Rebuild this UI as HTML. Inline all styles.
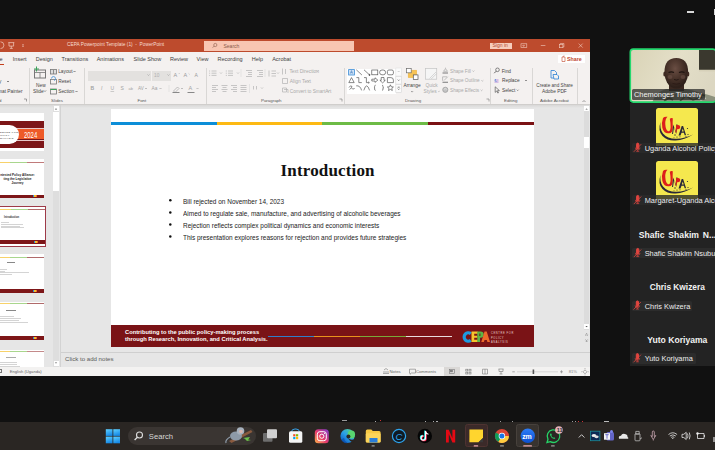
<!DOCTYPE html>
<html><head><meta charset="utf-8">
<style>
*{margin:0;padding:0;box-sizing:border-box}
html,body{width:715px;height:450px;overflow:hidden;background:#111111;font-family:"Liberation Sans",sans-serif;position:relative}
.a{position:absolute}
.t{position:absolute;white-space:nowrap;line-height:1}
.tab{position:absolute;top:56.6px;font-size:5.5px;color:#404040;white-space:nowrap;line-height:1}
.rt{position:absolute;font-size:5.2px;color:#444;white-space:nowrap;line-height:1}
.rd{color:#a9a9a9}
.sep{position:absolute;width:1px;background:#d9d7d5}
.gl{position:absolute;top:98.7px;font-size:4.4px;color:#555;white-space:nowrap;line-height:1}
</style></head><body>

<!-- zoom top icons -->
<div class="a" style="left:687px;top:11px;width:7px;height:1.5px;background:#d8d8d8"></div>
<div class="a" style="left:714px;top:9px;width:3px;height:6px;border:1px solid #d8d8d8"></div>

<!-- PowerPoint window -->
<div class="a" style="left:0;top:38.7px;width:590px;height:337.3px;background:#e6e6e6"></div>
<!-- title bar -->
<div class="a" style="left:0;top:38.7px;width:590px;height:13.3px;background:#bd4b2d"></div>
<div class="t" style="left:67px;top:42.6px;font-size:4.8px;color:#f6dcd2">CEPA Powerpoint Template (1)&nbsp; - &nbsp;PowerPoint</div>
<div class="a" style="left:204px;top:41px;width:150px;height:10px;background:#f8c6b2"></div>
<div class="t" style="left:223.5px;top:43.5px;font-size:5px;color:#8a5a4a">Search</div>
<svg class="a" style="left:0;top:0" width="715" height="450"><circle cx="215.3" cy="45" r="1.6" fill="none" stroke="#8a5a4a" stroke-width="0.6"/><path d="M214.2 46.1 l-1.5 1.5" stroke="#8a5a4a" stroke-width="0.7"/></svg>
<div class="a" style="left:490px;top:42.5px;width:22px;height:6.5px;background:#f6cdbd"></div>
<div class="t" style="left:492.5px;top:43.3px;font-size:5px;color:#b44a30">Sign in</div>
<svg class="a" style="left:0;top:0" width="715" height="450"><g fill="none" stroke="#f2cfc2" stroke-width="0.6">
 <rect x="521" y="43.8" width="5.8" height="3.8"/><path d="M523 45.7 h2 M523.5 44.8 l-0.8 0.9 l0.8 0.9"/>
 <path d="M540.8 45.5 h4.6"/>
 <rect x="559.3" y="44.3" width="3.6" height="3.4"/><path d="M560.3 44.3 v-0.8 h3.6 v3.4 h-1"/>
 <path d="M578.7 43.6 l4 4 M582.7 43.6 l-4 4"/>
</g></svg>
<svg class="a" style="left:0;top:0" width="715" height="450"><g fill="none" stroke="#f2cfc2" stroke-width="0.7">
 <path d="M0.5 41.8 a3.4 3.4 0 0 1 0 6.8"/>
 <path d="M8.3 42.6 h6 M9 42.6 v3.5 h4.6 v-3.5 M11.3 46.1 v2.2 M9.8 48.4 h3"/>
 <path d="M22 44.8 h2 M22 46.3 h2" stroke-width="0.6"/>
</g></svg>
<!-- ribbon -->
<div class="a" style="left:0;top:52px;width:590px;height:52px;background:#f4f1f0"></div>
<div class="a" style="left:0;top:104px;width:590px;height:1px;background:#d0cecc"></div>

<div class="a" style="left:0;top:63.5px;width:4px;height:1.2px;background:#c43e1c"></div>
<div class="tab" style="left:-0.6px;color:#333">e</div>
<div class="tab" style="left:12.8px">Insert</div>
<div class="tab" style="left:35.8px">Design</div>
<div class="tab" style="left:61.5px">Transitions</div>
<div class="tab" style="left:96.7px">Animations</div>
<div class="tab" style="left:133.6px">Slide Show</div>
<div class="tab" style="left:170px">Review</div>
<div class="tab" style="left:196.6px">View</div>
<div class="tab" style="left:217.5px">Recording</div>
<div class="tab" style="left:251.7px">Help</div>
<div class="tab" style="left:272.2px">Acrobat</div>
<div class="a" style="left:558px;top:55px;width:26.5px;height:8px;background:#fff"></div>
<div class="t" style="left:567px;top:56.8px;font-size:5.3px;color:#c0452a;font-weight:bold">Share</div>


<!-- ribbon groups -->
<div class="t" style="left:-1px;top:80.2px;font-size:4.8px;color:#555">y</div>
<div class="t" style="left:-2px;top:90.2px;font-size:4.8px;color:#444">mat Painter</div>
<div class="t" style="left:-1px;top:99px;font-size:4.4px;color:#555">d</div>
<div class="sep" style="left:28.5px;top:68.2px;height:36px"></div>
<div class="t" style="left:36px;top:83.9px;font-size:4.8px;color:#444">New</div>
<div class="t" style="left:33px;top:90.1px;font-size:4.8px;color:#444">Slide</div>
<div class="t" style="left:58.2px;top:70.2px;font-size:4.8px;color:#444">Layout</div>
<div class="t" style="left:58.2px;top:80.2px;font-size:4.8px;color:#444">Reset</div>
<div class="t" style="left:58.2px;top:90.1px;font-size:4.8px;color:#444">Section</div>
<div class="gl" style="left:51px">Slides</div>
<div class="sep" style="left:84px;top:68.2px;height:36px"></div>
<div class="a" style="left:88px;top:71.2px;width:62.8px;height:9.6px;background:#e3e1df"></div>
<div class="a" style="left:152.2px;top:71.2px;width:18.4px;height:9.6px;background:#e3e1df"></div>
<div class="t" style="left:154px;top:73.7px;font-size:4.8px;color:#b0b0b0">10</div>
<div class="gl" style="left:137.5px">Font</div>
<div class="sep" style="left:205.5px;top:68.2px;height:36px"></div>
<div class="t rd" style="left:289.4px;top:70.2px;font-size:4.9px">Text Direction</div>
<div class="t rd" style="left:289.8px;top:80.2px;font-size:4.9px">Align Text</div>
<div class="t rd" style="left:289.8px;top:89.9px;font-size:4.7px">Convert to SmartArt</div>
<div class="gl" style="left:261px">Paragraph</div>
<div class="sep" style="left:344px;top:68.2px;height:36px"></div>
<div class="a" style="left:347.3px;top:69.1px;width:48.3px;height:24.5px;background:#fff"></div>
<div class="t" style="left:403.5px;top:84.1px;font-size:4.8px;color:#444">Arrange</div>
<div class="t rd" style="left:425.5px;top:84.1px;font-size:4.8px">Quick</div>
<div class="t rd" style="left:423.5px;top:90.4px;font-size:4.8px">Styles</div>
<div class="t rd" style="left:450px;top:69.9px;font-size:4.7px">Shape Fill</div>
<div class="t rd" style="left:450px;top:79.4px;font-size:4.7px">Shape Outline</div>
<div class="t rd" style="left:450px;top:88.9px;font-size:4.7px">Shape Effects</div>
<div class="gl" style="left:405px">Drawing</div>
<div class="sep" style="left:490px;top:68.2px;height:36px"></div>
<div class="t" style="left:501.7px;top:69.9px;font-size:4.8px;color:#444">Find</div>
<div class="t" style="left:502px;top:79.4px;font-size:4.8px;color:#444">Replace</div>
<div class="t" style="left:502px;top:89.2px;font-size:4.8px;color:#444">Select</div>
<div class="gl" style="left:504px">Editing</div>
<div class="sep" style="left:532.3px;top:68.2px;height:36px"></div>
<div class="t" style="left:536.3px;top:83.9px;font-size:4.65px;color:#444">Create and Share</div>
<div class="t" style="left:542px;top:89.9px;font-size:4.8px;color:#444">Adobe PDF</div>
<div class="gl" style="left:540px;font-size:4.4px">Adobe Acrobat</div>
<div class="sep" style="left:577.3px;top:68.2px;height:36px"></div>
<svg class="a" style="left:0;top:0" width="715" height="450" viewBox="0 0 715 450">
 <g fill="none" stroke-width="0.8">
  <!-- clipboard dropdown -->
  <path d="M7 81 l1 1 l1 -1" stroke="#666"/>
  <path d="M24 99 h2.5 v2.5" stroke="#888"/>
  <!-- new slide -->
  <rect x="34.5" y="70" width="11" height="8" stroke="#777" stroke-width="1"/>
  <path d="M35 72.5 h10 M40 72.5 v5.5" stroke="#777"/>
  <path d="M36.5 66.5 v5 M34 69 h5" stroke="#3aa35a" stroke-width="1"/>
  <path d="M44 90.5 l1 1 l1 -1" stroke="#666"/>
  <!-- layout -->
  <rect x="50.5" y="69.5" width="6" height="4.5" stroke="#777" fill="#ddd"/>
  <path d="M53.5 70 v4" stroke="#777"/>
  <path d="M73.5 71 l1 1 l1 -1" stroke="#666"/>
  <!-- reset -->
  <rect x="50.5" y="79.5" width="6" height="4.5" stroke="#777"/>
  <path d="M51.5 78.5 a2 2 0 1 1 2.5 2" stroke="#3d8ed6"/>
  <!-- section -->
  <rect x="50.5" y="89" width="6" height="5" stroke="#777"/>
  <path d="M50.5 89.5 h6" stroke="#3aa35a" stroke-width="1"/>
  <path d="M75.5 91 l1 1 l1 -1" stroke="#666"/>
  <!-- font dropdown chevrons -->
  <path d="M147.5 74.5 l1 1 l1 -1" stroke="#aaa"/>
  <path d="M167.5 74.5 l1 1 l1 -1" stroke="#aaa"/>
 </g>
 <g fill="#9a9a9a" font-family="Liberation Sans" font-size="5.5">
  <text x="173.5" y="76.5">A</text><text x="183.5" y="76.5">A</text><text x="194.5" y="76.5" font-size="5">A</text>
 </g>
 <g fill="#a3a3a3" font-family="Liberation Sans" font-size="5">
  <text x="90.5" y="90" font-weight="bold">B</text>
  <text x="101" y="90" font-style="italic">I</text>
  <text x="110.5" y="90" text-decoration="underline">U</text>
  <text x="120.5" y="90">S</text>
  <text x="128.5" y="90" font-size="4">ab</text>
  <text x="138" y="90" font-size="4.5">AV</text>
  <text x="151.5" y="90" font-size="4.8">Aa</text>
  <text x="188.5" y="90" font-size="5.5">A</text>
 </g>
 <g fill="none" stroke="#a8a8a8" stroke-width="0.7">
  <path d="M178.7 74 l0.8 -0.8 M188.7 73.5 l0.8 0.8"/>
  <path d="M145 88 l1 1 l1 -1 M159.5 88 l1 1 l1 -1 M181 88 l1 1 l1 -1 M196.5 88 l1 1 l1 -1"/>
  <path d="M173.5 91 l4 -4 l1.5 1.5 l-4 4 z"/>
  <path d="M172.5 92.5 h7 M187.5 92.5 h7" stroke="#888" stroke-width="1"/>
  <path d="M169 85 v7" stroke="#ddd"/>
 </g>
 <!-- paragraph icons -->
 <g fill="none" stroke="#b2b2b2" stroke-width="0.7">
  <path d="M211.5 71 h5 M211.5 73.2 h5 M211.5 75.4 h5"/>
  <path d="M209.3 71 h0.8 M209.3 73.2 h0.8 M209.3 75.4 h0.8" stroke-width="0.9"/>
  <path d="M220 72.5 l1 1 l1 -1 M237 72.5 l1 1 l1 -1 M277 72.5 l1 1 l1 -1 M261 87.5 l1 1 l1 -1"/>
  <path d="M228 71 h5 M228 73.2 h5 M228 75.4 h5"/>
  <path d="M225.8 71 h1 M225.8 73.2 h1 M225.8 75.4 h1" stroke-width="0.8"/>
  <path d="M246 70.5 h6 M248 72.5 h4 M248 74.5 h4 M246 76.5 h6"/>
  <path d="M257 70.5 h6 M259 72.5 h4 M259 74.5 h4 M257 76.5 h6"/>
  <path d="M269 70.5 v6 M271.5 71 h4.5 M271.5 73.5 h4.5 M271.5 76 h4.5"/>
  <path d="M212 85.5 h6 M212 87.5 h4 M212 89.5 h6 M212 91.5 h4"/>
  <path d="M221.5 85.5 h6 M222.5 87.5 h4 M221.5 89.5 h6 M222.5 91.5 h4"/>
  <path d="M231 85.5 h6 M233 87.5 h4 M231 89.5 h6 M233 91.5 h4"/>
  <path d="M240.5 85.5 h6 M240.5 87.5 h6 M240.5 89.5 h6 M240.5 91.5 h6"/>
  <path d="M253.5 86 v3.5 M256.5 86 v3.5"/>
  <path d="M241 69 v8 M265 69 v8 M249.5 84 v9" stroke="#dcdcdc"/>
  <path d="M282.5 68.5 v6 M285.5 69 v5" />
  <path d="M282.5 78.5 h5 v5 h-5 z"/>
  <path d="M282.5 88 h4 v4 h-4 z M284 89.5 h4 v3.5"/>
  <path d="M316.5 70.5 l1 1 l1 -1 M307.5 80.5 l1 1 l1 -1 M327.5 90.5 l1 1 l1 -1"/>
  <path d="M339.5 99 h2.5 v2.5" stroke="#888"/>
 </g>
 <!-- drawing shapes gallery -->
 <g fill="none" stroke="#4a4a4a" stroke-width="0.65">
  <rect x="348.6" y="69.6" width="5.8" height="5.4" stroke="#3d8ed6" fill="#cfe1f5" stroke-width="0.8"/>
  <path d="M350.3 73.6 l1.2 -3 l1.2 3 M350.8 72.6 h1.4" stroke="#2a6fb8" stroke-width="0.5"/>
  <path d="M356.3 69.8 l5.6 5.2"/>
  <path d="M364 69.8 l5.2 4.8"/><circle cx="369.5" cy="74.9" r="0.6" fill="#4a4a4a"/>
  <rect x="371.8" y="70" width="6" height="4.8"/>
  <rect x="379.6" y="70" width="6" height="4.8" rx="2.4"/>
  <rect x="387.4" y="70" width="6" height="4.8" rx="1.5"/>
  <path d="M348.8 82.6 l2.7 -5 l2.7 5 z"/>
  <path d="M356.4 77.6 h2.4 v5 h3"/>
  <path d="M364 77.6 h2.4 v5 h2.8 M368.4 81.8 l0.9 0.8 l-0.9 0.8"/>
  <path d="M371.8 79.2 h3.2 v-1.4 l2.8 2.3 l-2.8 2.3 v-1.4 h-3.2 z"/>
  <path d="M381.2 77.5 h2.8 v2.8 h1.3 l-2.7 2.6 l-2.7 -2.6 h1.3 z"/>
  <path d="M387.4 77.6 h3.5 a2.5 2.5 0 0 1 2.5 2.5 v2.5 h-6 z"/>
  <path d="M349 87.5 q1.5 -2.8 3 -1 q-1.5 1.5 0.5 2.5 q1.5 0.5 2 -1 M349.5 89.5 l1.5 -1.3"/>
  <path d="M356.2 85.8 q4 -0.5 5.4 4.6"/>
  <path d="M363.8 90.4 q1.5 -5 3 -4.6 q1.4 0.4 2.8 4.6"/>
  <path d="M375.6 85.2 q-1 0 -1 1.3 v0.8 q0 0.5 -0.6 0.5 q0.6 0 0.6 0.5 v0.8 q0 1.3 1 1.3"/>
  <path d="M382 85.2 q1 0 1 1.3 v0.8 q0 0.5 0.6 0.5 q-0.6 0 -0.6 0.5 v0.8 q0 1.3 -1 1.3"/>
  <path d="M390.4 84.8 l0.9 2 l2.1 0.2 l-1.6 1.4 l0.5 2.1 l-1.9 -1.1 l-1.9 1.1 l0.5 -2.1 l-1.6 -1.4 l2.1 -0.2 z"/>
 </g>
 <g fill="none" stroke="#999" stroke-width="0.6">
  <rect x="395.8" y="68" width="5.8" height="8" fill="#fbfbfb" stroke="#e2e2e2"/>
  <rect x="395.8" y="76.3" width="5.8" height="7.8" fill="#fbfbfb" stroke="#d4d4d4"/>
  <rect x="395.8" y="84.4" width="5.8" height="8" fill="#fbfbfb" stroke="#d4d4d4"/>
  <path d="M397.7 79.6 l1 1 l1 -1 M397.7 87.2 h2 M397.7 88.6 l1 1 l1 -1" stroke="#444"/>
  <path d="M397.7 71.5 h2" stroke="#bbb"/>
 </g>
 <!-- arrange -->
 <g stroke-width="0.7">
  <rect x="408.2" y="70.2" width="8.5" height="7.4" fill="#f6c356" stroke="#eeb13a" stroke-width="0.5"/>
  <rect x="406.4" y="68.5" width="4.8" height="4.3" fill="#fff" stroke="#6a6a6a"/>
  <rect x="413.3" y="74.9" width="4.7" height="4.7" fill="#fff" stroke="#555"/>
  <path d="M411.3 91.3 l0.8 0.8 l0.8 -0.8" fill="none" stroke="#555"/>
  <rect x="425.4" y="68.5" width="11.3" height="10.7" fill="#f5f5f5" stroke="#c4c4c4"/>
  <path d="M429.5 78.5 l6.5 -6.5 M431.2 79 l5.5 -5.5" stroke="#c8c8c8" fill="none"/>
  <path d="M438 91 l0.9 0.9 l0.9 -0.9" fill="none" stroke="#bbb"/>
 </g>
 <!-- shape fill/outline/effects icons -->
 <g fill="none" stroke="#a8a8a8" stroke-width="0.7">
  <path d="M442.5 73 h5.5" stroke="#8c8c8c" stroke-width="1.2"/>
  <path d="M443.5 71.3 l2 -2.6 l2 2.6 z M445.5 68.7 v-1"/>
  <path d="M442.5 82.3 h5.5" stroke="#8c8c8c" stroke-width="1.2"/>
  <path d="M442.6 80.8 v-4 h4.5 M444 80.5 l3.8 -3.8"/>
  <circle cx="445.3" cy="89.8" r="2.6" fill="#c4c4c4" stroke="#9a9a9a"/>
  <path d="M443.8 89.3 q1.5 -1.5 3 0" stroke="#eee" stroke-width="0.6"/>
  <path d="M472.5 70.6 l0.9 0.9 l0.9 -0.9 M481.5 80.3 l0.9 0.9 l0.9 -0.9 M480.7 89.8 l0.9 0.9 l0.9 -0.9"/>
  <path d="M486.5 99 h2.5 v2.5" stroke="#888"/>
 </g>
 <!-- editing -->
 <g fill="none" stroke-width="0.7">
  <circle cx="497.5" cy="69.8" r="1.8" stroke="#555"/>
  <path d="M496.2 71.2 l-2 2" stroke="#555" stroke-width="0.9"/>
  <path d="M494.5 80 h4 M494.5 82 h4" stroke="#9e5fd3"/>
  <path d="M495.5 79 q-1 2 1 3" stroke="#3d8ed6"/>
  <path d="M525 80 l1 1 l1 -1 M516.8 89.7 l0.9 0.9 l0.9 -0.9" stroke="#666"/>
  <path d="M495.2 86.8 v5.6 l1.4 -1.4 l1.2 2.1 l0.7 -0.4 l-1.1 -2 l2 -0.1 z" stroke="#444" stroke-width="0.6"/>
 </g>
 <!-- adobe icon -->
 <g fill="none" stroke="#2a7fd4" stroke-width="0.8">
  <path d="M551 70.5 h3.5 l2 2 v5.5 h-5.5 z"/>
  <path d="M553 74.5 h4 l1.5 1.5 v3 h-4.5 z" fill="#f3f2f1"/>
 </g>
 <path d="M582.5 102 l1.5 -1.5 l1.5 1.5" fill="none" stroke="#777" stroke-width="0.7"/>
 <!-- share icon -->
 <path d="M562 57 h3 v4.5 h-3 z M563 57 l1 -1.5" fill="none" stroke="#c0452a" stroke-width="0.6"/>
</svg>


<!-- thumbnail pane -->
<div class="a" style="left:0;top:105px;width:590px;height:3px;background:linear-gradient(#d9d8d7,#e6e6e6)"></div>
<!-- thumb 1 -->
<div class="a" style="left:0;top:112.7px;width:44.3px;height:38.5px;background:#fff;overflow:hidden">
  <div class="a" style="left:0;top:8.3px;width:45px;height:27.5px;background:#7d1618"></div>
  <div class="a" style="left:0;top:15.2px;width:45px;height:1px;background:#e8c8c8"></div>
  <div class="a" style="left:0;top:16.7px;width:45px;height:9.9px;background:#ee5a28"></div>
  <div class="a" style="left:0;top:27.3px;width:45px;height:1px;background:#e8c8c8"></div>
  <div class="a" style="left:-12px;top:12.5px;width:30.8px;height:19.3px;background:#fff;border-radius:10px"></div>
  <div class="t" style="left:0px;top:18.6px;font-size:2.5px;color:#555;font-weight:bold;letter-spacing:0.45px;line-height:3px">ENTRE FOR<br>OLICY<br>NALYSIS</div>
  <div class="t" style="left:23.8px;top:17.4px;font-size:7px;color:#fff;letter-spacing:0px;transform:scale(0.85,1.3);transform-origin:0 0">2024</div>
</div>
<!-- thumb 2 -->
<div class="a" style="left:0;top:159.4px;width:44.3px;height:38.4px;background:#fff;overflow:hidden">
  <div class="a" style="left:0;top:2.3px;width:10px;height:0.9px;background:#f7d26a"></div>
  <div class="a" style="left:10px;top:2.3px;width:17px;height:0.9px;background:#a9d68d"></div>
  <div class="a" style="left:27px;top:2.3px;width:18px;height:0.9px;background:#c07a7a"></div>
  <div class="t" style="left:0px;top:14.8px;font-size:3.1px;color:#222;font-weight:bold;line-height:3.9px;text-align:center;width:35px">ntested Policy Alliance:<br>ting the Legislative<br>Journey</div>
  <div class="a" style="left:0;top:35.2px;width:45px;height:3.2px;background:#7d1618"></div>
  <div class="a" style="left:33px;top:36px;width:3.5px;height:1.5px;background:linear-gradient(90deg,#2d8fd8 0 30%,#f2c02c 30% 65%,#ef6a2a 65%)"></div>
</div>
<!-- thumb 3 selected -->
<div class="a" style="left:-2px;top:205.9px;width:47.9px;height:40.8px;border:1.6px solid #9e3a48;background:#fff;overflow:hidden">
  <div class="a" style="left:0;top:2.2px;width:12px;height:0.9px;background:#f7d26a"></div>
  <div class="a" style="left:12px;top:2.2px;width:17px;height:0.9px;background:#a9d68d"></div>
  <div class="a" style="left:29px;top:2.2px;width:20px;height:0.9px;background:#b06a6a"></div>
  <div class="t" style="left:5px;top:10.6px;font-size:2.6px;color:#333;font-weight:bold">Introduction</div>
  <div class="a" style="left:2px;top:15.5px;width:8px;height:0.6px;background:#d4d4d4"></div>
  <div class="a" style="left:2px;top:17.2px;width:22px;height:0.6px;background:#d4d4d4"></div>
  <div class="a" style="left:2px;top:18.9px;width:19px;height:0.6px;background:#d4d4d4"></div>
  <div class="a" style="left:2px;top:20.6px;width:23px;height:0.6px;background:#d4d4d4"></div>
  <div class="a" style="left:0;top:33.5px;width:50px;height:3.4px;background:#7d1618"></div>
  <div class="a" style="left:35px;top:34.4px;width:3.5px;height:1.5px;background:linear-gradient(90deg,#2d8fd8 0 30%,#f2c02c 30% 65%,#ef6a2a 65%)"></div>
</div>
<!-- thumb 4 -->
<div class="a" style="left:0;top:254.4px;width:44.3px;height:38.4px;background:#fff;overflow:hidden">
  <div class="a" style="left:0;top:2.3px;width:10px;height:0.9px;background:#f7d26a"></div>
  <div class="a" style="left:10px;top:2.3px;width:17px;height:0.9px;background:#a9d68d"></div>
  <div class="a" style="left:27px;top:2.3px;width:18px;height:0.9px;background:#b06a6a"></div>
  <div class="a" style="left:7px;top:7.7px;width:8px;height:0.8px;background:#888"></div>
  <div class="a" style="left:0;top:14.5px;width:7px;height:0.6px;background:#d4d4d4"></div>
  <div class="a" style="left:0;top:16.2px;width:5px;height:0.6px;background:#d4d4d4"></div>
  <div class="a" style="left:0;top:17.9px;width:29px;height:0.6px;background:#d4d4d4"></div>
  <div class="a" style="left:0;top:19.6px;width:12px;height:0.6px;background:#d4d4d4"></div>
  <div class="a" style="left:0;top:35px;width:45px;height:3.4px;background:#7d1618"></div>
  <div class="a" style="left:33px;top:35.8px;width:3.5px;height:1.5px;background:linear-gradient(90deg,#2d8fd8 0 30%,#f2c02c 30% 65%,#ef6a2a 65%)"></div>
</div>
<!-- thumb 5 -->
<div class="a" style="left:0;top:301.5px;width:44.3px;height:38.3px;background:#fff;overflow:hidden">
  <div class="a" style="left:0;top:1.6px;width:10px;height:0.9px;background:#f7d26a"></div>
  <div class="a" style="left:10px;top:1.6px;width:17px;height:0.9px;background:#a9d68d"></div>
  <div class="a" style="left:27px;top:1.6px;width:18px;height:0.9px;background:#b06a6a"></div>
  <div class="a" style="left:6px;top:8.5px;width:10px;height:0.8px;background:#888"></div>
  <div class="a" style="left:0;top:14.2px;width:14px;height:0.6px;background:#d4d4d4"></div>
  <div class="a" style="left:0;top:16.2px;width:21px;height:0.6px;background:#d4d4d4"></div>
  <div class="a" style="left:0;top:18.2px;width:19px;height:0.6px;background:#d4d4d4"></div>
  <div class="a" style="left:0;top:20.2px;width:28px;height:0.6px;background:#d4d4d4"></div>
  <div class="a" style="left:0;top:34.6px;width:45px;height:3.7px;background:#7d1618"></div>
  <div class="a" style="left:33px;top:35.5px;width:3.5px;height:1.5px;background:linear-gradient(90deg,#2d8fd8 0 30%,#f2c02c 30% 65%,#ef6a2a 65%)"></div>
</div>
<!-- thumb 6 -->
<div class="a" style="left:0;top:349.5px;width:44.3px;height:18px;background:#fff;overflow:hidden">
  <div class="a" style="left:0;top:1.6px;width:10px;height:0.9px;background:#f7d26a"></div>
  <div class="a" style="left:10px;top:1.6px;width:17px;height:0.9px;background:#a9d68d"></div>
  <div class="a" style="left:27px;top:1.6px;width:18px;height:0.9px;background:#c48a8a"></div>
  <div class="a" style="left:6px;top:7.8px;width:10px;height:0.7px;background:#aaa"></div>
  <div class="a" style="left:0;top:12.8px;width:17px;height:0.6px;background:#d4d4d4"></div>
  <div class="a" style="left:0;top:14.8px;width:17px;height:0.6px;background:#d4d4d4"></div>
  <div class="a" style="left:0;top:16.8px;width:20px;height:0.6px;background:#d4d4d4"></div>
</div>
<!-- left scrollbar -->
<div class="a" style="left:53px;top:105px;width:6px;height:262px;background:#dedede"></div>
<div class="a" style="left:53px;top:112px;width:6px;height:79px;background:#fff"></div>
<div class="a" style="left:53.5px;top:106px;width:5px;height:5px;background:#fff"></div>
<div class="a" style="left:53.5px;top:360.5px;width:5px;height:5px;background:#fff"></div>
<svg class="a" style="left:0;top:0" width="715" height="450"><path d="M54.8 109.5 l1.2 -1.2 l1.2 1.2 z M54.8 362.4 l1.2 1.2 l1.2 -1.2 z" fill="#555"/></svg>
<div class="a" style="left:60px;top:105px;width:1px;height:262px;background:#d3d3d3"></div>

<!-- slide canvas -->
<div class="a" style="left:111px;top:109px;width:423px;height:238px;background:#fff"></div>
<div class="a" style="left:111px;top:121.5px;width:105.6px;height:3.2px;background:#0c8ed8"></div>
<div class="a" style="left:216.6px;top:121.5px;width:105.8px;height:3.2px;background:#fdb913"></div>
<div class="a" style="left:322.4px;top:121.5px;width:105.6px;height:3.2px;background:#6dbb46"></div>
<div class="a" style="left:428px;top:121.5px;width:106px;height:3.2px;background:#7a1114"></div>
<div class="t" style="left:280.6px;top:162.2px;font-size:17px;letter-spacing:0.15px;font-family:'Liberation Serif',serif;font-weight:bold;color:#111">Introduction</div>
<div class="t" style="left:183px;top:196.2px;font-size:7.05px;color:#222;line-height:12.1px;transform:scaleX(0.918);transform-origin:0 0">Bill rejected on November 14, 2023<br>Aimed to regulate sale, manufacture, and advertising of alcoholic beverages<br>Rejection reflects complex political dynamics and economic interests<br>This presentation explores reasons for rejection and provides future strategies</div>
<svg class="a" style="left:0;top:0" width="715" height="450"><g fill="#111"><circle cx="170.3" cy="200.3" r="1.25"/><circle cx="170.3" cy="212.4" r="1.25"/><circle cx="170.3" cy="224.5" r="1.25"/><circle cx="170.3" cy="236.6" r="1.25"/></g></svg>
<!-- slide footer -->
<div class="a" style="left:111px;top:325px;width:423px;height:22px;background:#7a1316"></div>
<div class="t" style="left:125px;top:329.2px;font-size:5.75px;color:#fff;font-weight:bold;line-height:6.9px">Contributing to the public policy-making process<br>through Research, Innovation, and Critical Analysis.</div>
<div class="a" style="left:268.3px;top:335.5px;width:46px;height:1.2px;background:#2f7fc8"></div>
<div class="a" style="left:314.3px;top:335.5px;width:46px;height:1.2px;background:#e9921c"></div>
<div class="a" style="left:360.3px;top:335.5px;width:45.5px;height:1.2px;background:#7aa83a"></div>
<div class="a" style="left:405.8px;top:335.5px;width:46px;height:1.2px;background:#e8dcdc"></div>
<svg class="a" style="left:0;top:0" width="715" height="450">
 <path d="M470.8 333.6 a4.2 4.2 0 1 0 0 6.8" fill="none" stroke="#1e9be0" stroke-width="3.2"/>
 <path d="M471.5 331.5 h6.3 v2.3 h-3.6 v1.9 h3.2 v2.1 h-3.2 v1.9 h3.6 v2.3 h-6.3 z" fill="#f6c42c"/>
 <path d="M477.3 331.5 h3.3 a3.1 3.1 0 0 1 0 6.2 h-0.6 v4.3 h-2.7 z" fill="#5cb646"/>
 <rect x="479.4" y="333.5" width="1" height="2.5" fill="#7a1316"/>
 <path d="M481.3 342 l3.2 -10.5 h2.2 l3.3 10.5 h-2.6 l-0.6 -2 h-2.3 l-0.6 2 z" fill="#ef6a2a"/>
 <circle cx="467.2" cy="337" r="1.1" fill="#7a1316"/>
</svg>
<div class="t" style="left:491px;top:332.4px;font-size:2.6px;color:#e8d3d3;letter-spacing:0.6px;line-height:4.25px">CENTRE FOR<br>POLICY<br>ANALYSIS</div>


<!-- right scrollbar -->
<div class="a" style="left:583.7px;top:105px;width:5.8px;height:247px;background:#dcdcdc"></div>
<div class="a" style="left:583.7px;top:106px;width:5.8px;height:5px;background:#fff"></div>
<div class="a" style="left:583.7px;top:137px;width:5.8px;height:11px;background:#fff"></div>
<div class="a" style="left:583.7px;top:324px;width:5.8px;height:5.2px;background:#fff"></div>
<div class="a" style="left:583.7px;top:330px;width:5.8px;height:22px;background:#e6e6e6"></div>
<svg class="a" style="left:0;top:0" width="715" height="450">
 <path d="M585.4 109.6 l1.2 -1.2 l1.2 1.2 z M585.4 326 l1.2 1.2 l1.2 -1.2 z" fill="#555"/>
 <path d="M585.5 334.5 l1.1 -1.1 l1.1 1.1 M585.5 335.8 l1.1 -1.1 l1.1 1.1 M585.5 339.5 l1.1 1.1 l1.1 -1.1 M585.5 340.8 l1.1 1.1 l1.1 -1.1" fill="none" stroke="#777" stroke-width="0.6"/>
</svg>

<!-- notes pane -->
<div class="a" style="left:61px;top:352.3px;width:529px;height:0.8px;background:#cfcfcf"></div>
<div class="t" style="left:65.1px;top:356.1px;font-size:6.1px;color:#5a5a5a">Click to add notes</div>
<!-- status bar -->
<div class="a" style="left:0;top:367.4px;width:590px;height:8.3px;background:#f3f2f1"></div>
<div class="t" style="left:9.7px;top:370.3px;font-size:4.15px;color:#666">English (Uganda)</div>
<div class="a" style="left:-1px;top:369px;width:3px;height:4px;border:0.7px solid #777"></div>
<div class="t" style="left:389.5px;top:369.6px;font-size:4.3px;color:#666">Notes</div>
<div class="t" style="left:416px;top:369.6px;font-size:4.15px;color:#666">Comments</div>
<div class="a" style="left:444.3px;top:367.4px;width:15.7px;height:8.3px;background:#dad8d6"></div>
<svg class="a" style="left:0;top:0" width="715" height="450">
 <g fill="none" stroke="#777" stroke-width="0.6">
  <path d="M383 373.5 h6 M383 372 h6 M384 370 l2 -1.5 l2 1.5"/>
  <path d="M409.5 369.2 h6 v3.8 h-4 l-1.5 1.3 v-1.3 h-0.5 z"/>
  <rect x="449.5" y="369.3" width="5" height="4"/>
  <rect x="450.5" y="370.3" width="2" height="1.5" fill="#777"/>
  <rect x="465.8" y="369.2" width="2" height="1.8"/><rect x="469" y="369.2" width="2" height="1.8"/>
  <rect x="465.8" y="372.2" width="2" height="1.8"/><rect x="469" y="372.2" width="2" height="1.8"/>
  <path d="M482.5 369.2 h5 v4.8 h-5 z M485 369.2 v4.8"/>
  <path d="M498.5 369 h5 M499 369 v2.5 h4 v-2.5 M501 371.5 v2.5 M499.5 374 h3"/>
  <path d="M512.3 371.8 h2.5 M560 371.8 h3 M561.5 370.3 v3"/>
  <path d="M517 371.8 h41" stroke="#bbb" stroke-width="0.5"/>
  <path d="M583 371.8 l2 -2 l2 2 l-2 2 z M585 369 v-0.8 M585 374.6 v0.8 M582.2 371.8 h-0.8 M587.8 371.8 h0.8"/>
 </g>
 <rect x="532.6" y="369.5" width="1.6" height="4.5" fill="#555"/>
</svg>
<div class="t" style="left:568.7px;top:369.8px;font-size:4.2px;color:#888">81%</div>


<!-- zoom gallery -->
<div class="a" style="left:630px;top:102.5px;width:90px;height:263.5px;background:#232323"></div>
<svg class="a" style="left:0;top:0" width="715" height="450">
 <defs>
  <linearGradient id="wall" x1="0" y1="0" x2="1" y2="0.3">
   <stop offset="0" stop-color="#d9d3b6"/><stop offset="0.55" stop-color="#e4dfc8"/><stop offset="1" stop-color="#dcd7c2"/>
  </linearGradient>
  <radialGradient id="head" cx="0.45" cy="0.35" r="0.6">
   <stop offset="0" stop-color="#6a4e43"/><stop offset="0.6" stop-color="#463128"/><stop offset="1" stop-color="#2e201a"/>
  </radialGradient>
  <clipPath id="vclip"><rect x="630.3" y="49.2" width="90" height="52.8" rx="2.5"/></clipPath>
 </defs>
 <g clip-path="url(#vclip)">
  <rect x="630" y="49" width="90" height="54" fill="url(#wall)"/>
  <rect x="699" y="49" width="20" height="21" fill="#3a382e"/>
  <rect x="699" y="69.5" width="20" height="2" fill="#cfc9b0" opacity="0.5"/>
  <path d="M652 103 q3 -11 14 -14 l20 0 q14 3 32 9 v8 z" fill="#8d927e"/>
  <path d="M658 97 l4 -3 l3 3 l4 -4 l3 2 l5 -3 l4 4 l5 -2 l4 3 l6 -1 l5 4 l5 -2" fill="none" stroke="#e0e0d4" stroke-width="1.3" opacity="0.75"/>
  <path d="M664 101 l5 -3 l4 2 M680 101 l6 -5 l7 4 l9 -3 M700 94 l5 2" fill="none" stroke="#4a573c" stroke-width="1.6"/>
  <rect x="669" y="82" width="15" height="9" fill="#3a2820"/>
  <path d="M664.5 72 q0 -14 11.8 -14 q11.8 0 11.8 14 q0 6 -2.5 10.5 q-3.5 6 -9.3 6 q-5.8 0 -9.3 -6 q-2.5 -4.5 -2.5 -10.5 z" fill="url(#head)"/>
  <ellipse cx="664.6" cy="74" rx="1.3" ry="2.6" fill="#3e2a22"/>
  <ellipse cx="688" cy="74" rx="1.3" ry="2.6" fill="#3e2a22"/>
  <path d="M668.5 72.5 q3 -1.3 5.5 0 M679 72.5 q3 -1.3 5.5 0" fill="none" stroke="#1e1410" stroke-width="1.1"/>
  <ellipse cx="670" cy="77" rx="2.5" ry="2" fill="#6e5248" opacity="0.6"/>
  <ellipse cx="683" cy="77" rx="2.5" ry="2" fill="#6e5248" opacity="0.6"/>
  <path d="M674 79.5 q2.3 1.2 4.6 0" fill="none" stroke="#241814" stroke-width="1"/>
  <path d="M672.5 83.5 q3.8 1.3 7.6 0" fill="none" stroke="#2a1a15" stroke-width="0.9"/>
 </g>
 <rect x="630.3" y="49.1" width="85.6" height="53" rx="3" fill="none" stroke="#25d86e" stroke-width="1.6"/>
</svg>
<div class="a" style="left:632.1px;top:89.3px;width:73px;height:10.8px;background:rgba(38,38,38,0.72);border-radius:1.5px"></div>
<div class="t" style="left:634px;top:91.3px;font-size:7.4px;color:#f2f2f2">Chemonges Timothy</div>

<!-- tile 2 -->
<div class="a" style="left:656.3px;top:108px;width:42px;height:38px;background:#f5e84e;border-radius:2.5px 2.5px 0 0"></div>
<!-- tile 3 -->
<div class="a" style="left:656.3px;top:161px;width:42px;height:38px;background:#f5e84e;border-radius:2.5px 2.5px 0 0"></div>
<svg class="a" style="left:0;top:0" width="715" height="450">
 <g id="upa">
  <path d="M660.5 122 q-3 9 2 14 q5 5 13 4.5 q9 -0.5 17.5 -6 q-8 4 -16.5 4.3 q-9 0.2 -13.5 -5.3 q-3.5 -4.5 -2.5 -11.5 z" fill="#2a2838"/>
  <path d="M663 118 q1.5 -1.8 4.5 -1.2 q-2.5 2 -2.2 7.5 q0.3 6 3 7 q2 0.5 2.3 -4 q0.2 -3.5 -0.8 -8.5 q1.5 -1.5 3 -0.5 q-0.3 5 0 9 q0.2 6 -4 6 q-5 0.5 -6.5 -5.5 q-1 -5 0.7 -9.8 z" fill="#dd1f1b"/>
  <path d="M672 134 l1.3 -9.5 l2.2 7 l1 -7.2 l1 0.2 l-1.3 9.5 l-2.2 -6.5 l-1 6.5 z" fill="#2a2838"/>
  <path d="M675.5 132.5 l0.8 -7.5 h2 q2.2 0.3 2 2.2 q-0.3 2 -2.4 2 h-1 l-0.4 3.3 z" fill="#dd1f1b"/>
  <path d="M678.5 135.5 l3.2 -9.5 h1.4 l3 9.3 h-1.4 l-0.8 -2.5 h-2.4 l-1 2.7 z M681.8 131.5 h1.9 l-0.9 -3 z" fill="#2a2838"/>
  <circle cx="675" cy="135" r="0.7" fill="#2a2838"/><circle cx="677" cy="137" r="0.6" fill="#2a2838"/><circle cx="680" cy="136.7" r="0.5" fill="#2a2838"/><circle cx="687.5" cy="128.5" r="0.6" fill="#2a2838"/><circle cx="688" cy="134.5" r="0.6" fill="#2a2838"/><circle cx="686" cy="136.5" r="0.5" fill="#2a2838"/><circle cx="674" cy="137.5" r="0.4" fill="#2a2838"/>
 </g>
 <use href="#upa" x="0" y="53"/>
</svg>
<div class="a" style="left:632.3px;top:143px;width:84px;height:10px;background:rgba(42,42,42,0.8);border-radius:1.5px"></div>
<div class="a" style="left:632.3px;top:195.3px;width:84px;height:10px;background:rgba(42,42,42,0.8);border-radius:1.5px"></div>
<div class="a" style="left:632.3px;top:248.3px;width:84px;height:10px;background:#2c2c2c;border-radius:1.5px"></div>
<div class="a" style="left:632px;top:300.6px;width:59.7px;height:10.4px;background:#2c2c2c;border-radius:1.5px"></div>
<div class="a" style="left:632px;top:353.3px;width:64.3px;height:10.4px;background:#2c2c2c;border-radius:1.5px"></div>
<div class="t" style="left:644.7px;top:144.8px;font-size:7.4px;color:#ececec">Uganda Alcohol Policy Alliance</div>
<div class="t" style="left:644.7px;top:197.1px;font-size:7.4px;color:#ececec">Margaret-Uganda Alcohol</div>
<div class="t" style="left:644.7px;top:250.1px;font-size:7.4px;color:#ececec">Shafic Shakim Nsubuga</div>
<div class="t" style="left:644.7px;top:302.5px;font-size:7.4px;color:#ececec">Chris Kwizera</div>
<div class="t" style="left:644.7px;top:355.2px;font-size:7.4px;color:#ececec">Yuto Koriyama</div>
<div class="t" style="left:638.7px;top:230.5px;font-size:8.6px;color:#f2f2f2;font-weight:bold;word-spacing:1.5px">Shafic Shakim N...</div>
<div class="t" style="left:649.7px;top:283px;font-size:8.35px;color:#f2f2f2;font-weight:bold">Chris Kwizera</div>
<div class="t" style="left:647.2px;top:335.8px;font-size:8.6px;color:#f2f2f2;font-weight:bold">Yuto Koriyama</div>
<svg class="a" style="left:0;top:0" width="715" height="450">
 <g id="mute" fill="none" stroke="#e0453f" stroke-width="1">
  <path d="M636.6 144.2 v3.6 a1.1 1.1 0 0 0 2.2 0 v-3.6 a1.1 1.1 0 0 0 -2.2 0 z" fill="#e0453f"/>
  <path d="M635.4 147.6 a2.3 2.3 0 0 0 4.6 0 M637.7 150 v1.2 M636.2 151.3 h3" stroke-width="0.7"/>
  <path d="M633.8 151.8 l7.4 -7.6" stroke-width="0.8"/>
 </g>
 <use href="#mute" y="52.3"/>
 <use href="#mute" y="105.3"/>
 <use href="#mute" x="-0.3" y="157.8"/>
 <use href="#mute" x="-0.3" y="210.5"/>
</svg>

<!-- taskbar -->
<div class="a" style="left:0;top:421.7px;width:715px;height:28.3px;background:#2a2623"></div>
<div class="a" style="left:342px;top:420.3px;width:5px;height:1px;background:#999"></div>
<div class="a" style="left:375px;top:420.5px;width:1px;height:1px;background:#aaa"></div>
<div class="a" style="left:379.5px;top:420.3px;width:1.5px;height:1px;background:#c33"></div>
<div class="a" style="left:425px;top:420.5px;width:1px;height:1px;background:#aaa"></div>
<div class="a" style="left:432.5px;top:420.5px;width:1.5px;height:1px;background:#aaa"></div>
<div class="a" style="left:436px;top:420.5px;width:1.5px;height:1px;background:#aaa"></div>
<div class="a" style="left:499.5px;top:420.8px;width:1px;height:1px;background:#999"></div>
<div class="a" style="left:511.8px;top:420.8px;width:1px;height:1px;background:#999"></div>
<div class="a" style="left:572.3px;top:420.8px;width:1px;height:1px;background:#999"></div>
<div class="a" style="left:575px;top:420.8px;width:1px;height:1px;background:#999"></div>
<div class="a" style="left:578.2px;top:420.8px;width:1.2px;height:1px;background:#c33"></div>
<div class="a" style="left:582px;top:420.8px;width:1.2px;height:1px;background:#c33"></div>
<div class="a" style="left:603.6px;top:420.6px;width:5.4px;height:1.2px;background:#bbb"></div>
<div class="a" style="left:127.5px;top:427px;width:128px;height:17.8px;background:#3a3532;border-radius:9px"></div>
<div class="t" style="left:148.8px;top:432.6px;font-size:7.65px;color:#d6d6d6">Search</div>
<div class="a" style="left:464.5px;top:424.3px;width:23.5px;height:22.7px;background:#3b2a29;border-radius:2.5px;border:0.6px solid #4e3331"></div>
<div class="a" style="left:516px;top:424.3px;width:23px;height:22.7px;background:#38332f;border-radius:2.5px;border:0.6px solid #47413c"></div>
<svg class="a" style="left:0;top:0" width="715" height="450">
 <defs>
  <linearGradient id="win" x1="0" y1="0" x2="0.3" y2="1"><stop offset="0" stop-color="#5fd0ff"/><stop offset="1" stop-color="#178ae6"/></linearGradient>
  <linearGradient id="ig" x1="0" y1="1" x2="1" y2="0"><stop offset="0" stop-color="#fdb44a"/><stop offset="0.45" stop-color="#e73a6c"/><stop offset="1" stop-color="#7b3bd1"/></linearGradient>
  <linearGradient id="edge" x1="0.2" y1="1" x2="0.9" y2="0.1"><stop offset="0" stop-color="#0d5cc0"/><stop offset="0.5" stop-color="#2a9ee8"/><stop offset="1" stop-color="#4cd09a"/></linearGradient>
  <linearGradient id="zm" x1="0" y1="0" x2="0" y2="1"><stop offset="0" stop-color="#2d7df7"/><stop offset="1" stop-color="#0b4fd0"/></linearGradient>
 </defs>
 <!-- windows -->
 <g fill="url(#win)">
  <rect x="105.8" y="429.2" width="6.7" height="6.7"/><rect x="113.3" y="429.2" width="6.7" height="6.7"/>
  <rect x="105.8" y="436.6" width="6.7" height="6.7"/><rect x="113.3" y="436.6" width="6.7" height="6.7"/>
 </g>
 <!-- search glyph -->
 <circle cx="139.5" cy="435" r="3" fill="none" stroke="#ddd" stroke-width="1.1"/>
 <path d="M137.4 437.2 l-2.8 2.8" stroke="#ddd" stroke-width="1.3"/>
 <!-- monkey -->
 <path d="M229 441 l22 -11 l1.5 2 l-21 11 z" fill="#8a5a3e"/>
 <path d="M243 438 l7 -1 l-2 3 z M245 439 l6 1 l-4 1 z" fill="#6cc04a"/>
 <ellipse cx="236" cy="436" rx="6" ry="4.5" fill="#8d9aa8"/>
 <circle cx="240.5" cy="431" r="3.8" fill="#a6b1bd"/>
 <circle cx="241" cy="431.5" r="1.8" fill="#d9b7b0"/>
 <path d="M230 437 q-5 3 -4 6" fill="none" stroke="#8d9aa8" stroke-width="1.2"/>
 <!-- task view -->
 <rect x="263" y="433" width="9.5" height="8.7" rx="1" fill="#6e6e6e"/>
 <rect x="267" y="429.3" width="10" height="9" rx="1" fill="#d2d2d2"/>
 <!-- store -->
 <path d="M291.5 432 q0 -3 3.5 -3 h1 q3.5 0 3.5 3" fill="none" stroke="#39a2e8" stroke-width="1"/>
 <rect x="289" y="431.3" width="13.3" height="11.4" rx="1.5" fill="#f4f4f4"/>
 <rect x="293.2" y="434.2" width="2.2" height="2.2" fill="#f25022"/><rect x="296" y="434.2" width="2.2" height="2.2" fill="#7fba00"/>
 <rect x="293.2" y="437" width="2.2" height="2.2" fill="#00a4ef"/><rect x="296" y="437" width="2.2" height="2.2" fill="#ffb900"/>
 <!-- instagram -->
 <rect x="314.8" y="429.2" width="14" height="14" rx="3.5" fill="url(#ig)"/>
 <rect x="317.3" y="431.7" width="9" height="9" rx="2.5" fill="none" stroke="#fff" stroke-width="1"/>
 <circle cx="321.8" cy="436.2" r="2.1" fill="none" stroke="#fff" stroke-width="1"/>
 <circle cx="324.6" cy="433.4" r="0.55" fill="#fff"/>
 <!-- edge -->
 <circle cx="347.5" cy="436" r="7.1" fill="url(#edge)"/>
 <ellipse cx="351.4" cy="434.6" rx="3.7" ry="4" fill="#58d670"/>
 <circle cx="348.4" cy="436.6" r="2" fill="#2a2623"/>
 <path d="M347.8 438.3 q3.5 2.4 7.5 0.5 l0.8 1.2 l-3.2 2.6 q-3.2 -1.3 -5.1 -4.3 z" fill="#2a2623"/>
 <path d="M341 439.5 q2 4 6.5 3.6 q-3 -1.5 -3.5 -5 z" fill="#0a4fae" opacity="0.7"/>
 <!-- files -->
 <path d="M365.8 431 q0 -1.5 1.5 -1.5 h4 l1.5 1.5 h6.3 q1.5 0 1.5 1.5 v8.5 q0 1.5 -1.5 1.5 h-11.8 q-1.5 0 -1.5 -1.5 z" fill="#f7c944"/>
 <rect x="365.8" y="433.2" width="14.8" height="9.3" rx="1.2" fill="#fbd45a"/>
 <rect x="369.5" y="438" width="8" height="4.5" fill="#2a7ed8"/>
 <rect x="371.5" y="445.3" width="3.3" height="1.2" rx="0.6" fill="#9a9a9a"/>
 <!-- C icon -->
 <circle cx="399" cy="436" r="6.6" fill="#0f1a24" stroke="#2ea4ee" stroke-width="1.2"/>
 <text x="395.5" y="439.6" font-family="Liberation Sans" font-size="9.5" font-style="italic" fill="#2ea4ee">C</text>
 <!-- tiktok -->
 <circle cx="424.8" cy="436" r="7.2" fill="#050505"/>
 <path d="M425.5 431 v7 a2.2 2.2 0 1 1 -2.2 -2.2" fill="none" stroke="#25f4ee" stroke-width="1.3" transform="translate(-0.6,-0.4)"/>
 <path d="M425.5 431 v7 a2.2 2.2 0 1 1 -2.2 -2.2" fill="none" stroke="#fe2c55" stroke-width="1.3" transform="translate(0.6,0.4)"/>
 <path d="M425.5 431 v7 a2.2 2.2 0 1 1 -2.2 -2.2 M425.5 431.5 q0.8 2.5 3 2.7" fill="none" stroke="#fff" stroke-width="1.1"/>
 <!-- netflix -->
 <path d="M446 429.8 h2.8 l3.6 8.5 v-8.5 h2.8 v12.7 h-2.8 l-3.6 -8.5 v8.5 h-2.8 z" fill="#e50914"/>
 <!-- sticky -->
 <path d="M469.4 429.5 h13.6 v8.5 l-4.5 4.3 h-9.1 z" fill="#ffd52e"/>
 <path d="M483 438 v4.3 h-4.5 z" fill="#3a3a3a"/>
 <rect x="473.7" y="445.2" width="4.5" height="1.3" rx="0.6" fill="#e9a7ae"/>
 <!-- chrome -->
 <circle cx="501.9" cy="436" r="7" fill="#db4437"/>
 <path d="M501.9 436 L495.8 432.5 A7 7 0 0 0 498.4 442.1 Z" fill="#0f9d58"/>
 <path d="M501.9 436 L498.4 442.1 A7 7 0 0 0 508.9 436 Z" fill="#ffcd40"/>
 <path d="M501.9 436 L508.9 436 A7 7 0 0 0 507.9 432.5 Z" fill="#db4437"/>
 <circle cx="501.9" cy="436" r="3.2" fill="#fff"/>
 <circle cx="501.9" cy="436" r="2.5" fill="#1a73e8"/>
 <rect x="500" y="445.2" width="4" height="1.3" rx="0.6" fill="#9a9a9a"/>
 <!-- zoom -->
 <circle cx="527.8" cy="435.8" r="7.2" fill="url(#zm)"/>
 <text x="522.3" y="438.6" font-family="Liberation Sans" font-size="7" font-weight="bold" fill="#fff" letter-spacing="-0.3">zm</text>
 <rect x="523.2" y="445.2" width="8.8" height="1.3" rx="0.6" fill="#e9a7ae"/>
 <!-- whatsapp -->
 <path d="M547 442.5 l1 -3.2 a6.3 6.3 0 1 1 2.3 2.3 z" fill="none" stroke="#25d366" stroke-width="1.3"/>
 <path d="M550.5 433.5 q-0.8 0.5 -0.3 2 q1 2.5 3.5 3.3 q1.2 0.3 1.6 -0.6 l-1.2 -0.9 l-0.8 0.5 q-1.5 -0.7 -2 -2 l0.5 -0.8 l-0.6 -1.4 z" fill="#25d366"/>
 <circle cx="558.9" cy="430" r="3.8" fill="#e4b3bb"/>
 <text x="556.7" y="432.2" font-family="Liberation Sans" font-size="5.5" font-weight="bold" fill="#333">11</text>
 <rect x="551" y="445.2" width="3.8" height="1.3" rx="0.6" fill="#9a9a9a"/>
 <!-- tray -->
 <path d="M578.8 437.5 l2.8 -2.8 l2.8 2.8" fill="none" stroke="#ddd" stroke-width="0.9"/>
 <!-- tray icons -->
 <rect x="590.5" y="431.2" width="9.4" height="9.5" fill="#0d2a55" stroke="#1a8a9a" stroke-width="0.8"/>
 <ellipse cx="594" cy="435.5" rx="2.4" ry="1.5" fill="#eee"/><ellipse cx="596.5" cy="436.8" rx="2.2" ry="1.4" fill="#ddd"/>
 <rect x="606.5" y="432" width="7.5" height="8.5" rx="1.5" fill="#6264c7"/>
 <circle cx="611.5" cy="431.5" r="1.5" fill="#7b83eb"/>
 <rect x="604" y="433.2" width="6" height="6.5" fill="#f4f4f4"/>
 <path d="M605.3 434.7 h3.4 M607 434.7 v4" stroke="#5b5fc7" stroke-width="0.9"/>
 <path d="M619 438.8 q-0.8 -2.8 2 -3 q1 -2.8 4 -1.8 q2.8 0.5 2.5 3 q1.3 0.5 0.7 1.8 z" fill="#e8e8e8"/>
 <path d="M635 434 h5 v6 q0 0.8 -0.8 0.8 h-3.4 q-0.8 0 -0.8 -0.8 z M635.8 431.4 h3.4 v2.6 h-3.4 z M640 439 l2 -1.3" fill="none" stroke="#cfcfcf" stroke-width="0.7"/>
 <path d="M652.3 432 q0 -1 1 -1 q1 0 1 1 v4.5 l1.5 -1 l-2.5 4 l-2.5 -4 l1.5 1 z M653.3 439.5 v1" fill="none" stroke="#c9a7b3" stroke-width="0.8"/>
 <path d="M668.5 434.5 q4.3 -3.5 8.6 0 M669.8 436 q3 -2.3 6 0 M671.2 437.4 q1.6 -1.2 3.2 0" fill="none" stroke="#e8e8e8" stroke-width="0.8"/>
 <circle cx="672.8" cy="438.5" r="0.6" fill="#eee"/>
 <path d="M682 434.3 h1.8 l2.4 -2 v7.2 l-2.4 -2 h-1.8 z M687.5 433.5 q1 2.4 0 4.8 M689.3 432.5 q1.5 3.4 0 6.8" fill="none" stroke="#e8e8e8" stroke-width="0.8"/>
 <path d="M697.5 433.5 h6.5 v5 h-6.5 z M704.5 435 v2" fill="none" stroke="#e8e8e8" stroke-width="0.8"/>
 <circle cx="697.5" cy="433.5" r="1.2" fill="#eee"/>
 <path d="M714 437 v5" stroke="#ddd" stroke-width="1.2"/>
</svg>
</body></html>
